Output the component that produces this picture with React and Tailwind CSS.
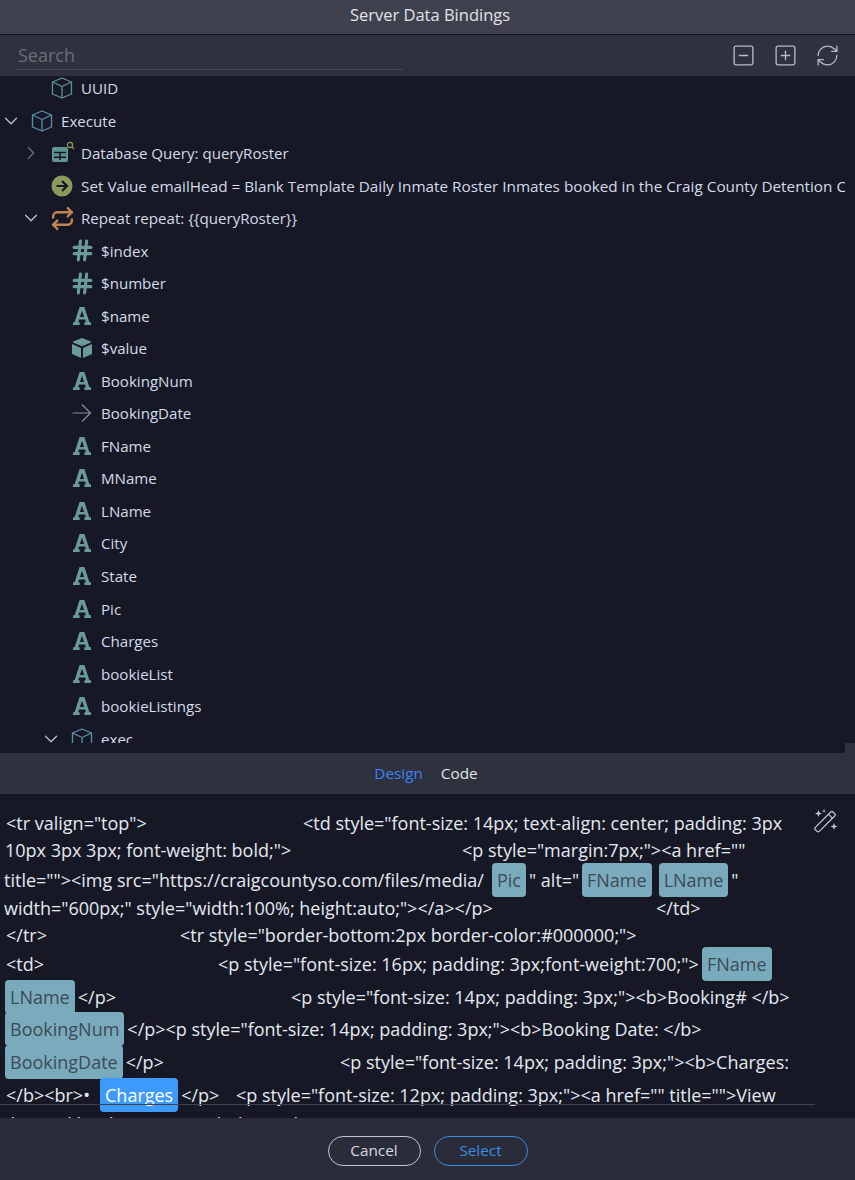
import React from 'react';
import { ChevronRight, ChevronDown, Hash, SquareMinus, SquarePlus, RefreshCw, Repeat } from 'lucide-react';

const AIcon = () => (
  <svg width="20" height="20" viewBox="0 0 20 20" className="text-[#6b9a9a]">
    <path fill="currentColor" fillRule="evenodd" d="M7.6 1h4.8l5 15.2H19V19h-6.6v-2.8h1.5l-.8-2.6H7l-.8 2.6h1.5V19H1v-2.8h1.6L7.6 1zM10 4.8 7.9 11h4.2L10 4.8z" />
  </svg>
);

const HashIcon = () => <Hash size={25} strokeWidth={3} className="shrink-0 text-[#6b9a9a]" />;

const CubeIcon = ({ color }) => (
  <svg width="22" height="22" viewBox="0 0 22 22" fill="none" stroke="currentColor" strokeWidth="1.3" strokeLinejoin="round" className={`shrink-0 ${color}`}>
    <path d="M11 1 20.5 5v12L11 21 1.5 17V5L11 1z" />
    <path d="M1.5 5 11 9.5 20.5 5M11 9.5V21" />
  </svg>
);

const SolidBox = () => (
  <svg width="22" height="22" viewBox="0 0 22 22" className="shrink-0 text-[#6b9a9a]">
    <path fill="currentColor" d="M11 1 2 4.4v1.2l9 3.6 9-3.6V4.4L11 1z" />
    <path fill="currentColor" d="M1 7v10l9 4V11L1 7zm20 0-9 4v10l9-4V7z" />
  </svg>
);

const DbIcon = () => (
  <svg width="23" height="21" viewBox="0 0 23 21" className="ml-[3px] -mt-[3px] shrink-0">
    <rect x="0" y="6" width="16" height="15" rx="2" fill="#5f9490" />
    <path d="M2 11.5h12M2 16.2h12M8 11.5V19" stroke="#161925" strokeWidth="1.5" />
    <circle cx="18" cy="4" r="2.6" fill="none" stroke="#8a9a5b" strokeWidth="1.2" />
    <path d="m20 6 2 2" stroke="#8a9a5b" strokeWidth="1.2" />
  </svg>
);

const SetIcon = () => (
  <svg width="22" height="22" viewBox="0 0 22 22" className="shrink-0">
    <circle cx="11" cy="11" r="10.5" fill="#8a9a5b" />
    <path d="M5.5 11h10M11 6l5 5-5 5" fill="none" stroke="#161925" strokeWidth="2.2" />
  </svg>
);

const ArrowIcon = () => (
  <svg width="20" height="20" viewBox="0 0 20 20" fill="none" stroke="#8d8d9b" strokeWidth="1.2" className="shrink-0">
    <path d="M0.5 10h18M10 1.5l8.5 8.5-8.5 8.5" />
  </svg>
);

const WandIcon = () => (
  <svg width="24" height="24" viewBox="0 0 24 24" className="absolute right-[17px] top-[15px] text-[#c4c6d0]">
    <g fill="none" stroke="currentColor" strokeWidth="1.2">
      <rect x="-1.5" y="9.5" width="25" height="5.6" rx="1.6" transform="rotate(-45 11.5 12.5)" />
      <path d="m14.8 5.6 4 4" />
    </g>
    <path fill="currentColor" d="M4.5 1 5.4 3.6 8 4.5 5.4 5.4 4.5 8 3.6 5.4 1 4.5 3.6 3.6zM20 14l.9 2.6 2.6.9-2.6.9-.9 2.6-.9-2.6-2.6-.9 2.6-.9zM10 0l.5 1.5 1.5.5-1.5.5L10 4l-.5-1.5L8 2l1.5-.5z" />
  </svg>
);

const rows = [
  { indent: 51, icon: <CubeIcon color="text-[#5f9490]" />, label: 'UUID' },
  { indent: 31, chev: 'down', icon: <CubeIcon color="text-[#5b8fa8]" />, label: 'Execute' },
  { indent: 51, chev: 'right', icon: <DbIcon />, label: 'Database Query: queryRoster' },
  { indent: 51, icon: <SetIcon />, label: 'Set Value emailHead = Blank Template Daily Inmate Roster Inmates booked in the Craig County Detention Center', wide: true },
  { indent: 51, chev: 'down', icon: <Repeat size={25} strokeWidth={2.25} className="shrink-0 text-[#c08552]" />, label: 'Repeat repeat: {{queryRoster}}' },
  { indent: 71, icon: <HashIcon />, label: '$index' },
  { indent: 71, icon: <HashIcon />, label: '$number' },
  { indent: 71, icon: <AIcon />, label: '$name' },
  { indent: 71, icon: <SolidBox />, label: '$value' },
  { indent: 71, icon: <AIcon />, label: 'BookingNum' },
  { indent: 71, icon: <ArrowIcon />, label: 'BookingDate' },
  { indent: 71, icon: <AIcon />, label: 'FName' },
  { indent: 71, icon: <AIcon />, label: 'MName' },
  { indent: 71, icon: <AIcon />, label: 'LName' },
  { indent: 71, icon: <AIcon />, label: 'City' },
  { indent: 71, icon: <AIcon />, label: 'State' },
  { indent: 71, icon: <AIcon />, label: 'Pic' },
  { indent: 71, icon: <AIcon />, label: 'Charges' },
  { indent: 71, icon: <AIcon />, label: 'bookieList' },
  { indent: 71, icon: <AIcon />, label: 'bookieListings' },
  { indent: 71, chev: 'down', icon: <CubeIcon color="text-[#5b8fa8]" />, label: 'exec' },
];

const Row = ({ indent, chev, icon, label, wide }) => (
  <div className="flex h-[32.53px] shrink-0 items-center whitespace-nowrap" style={{ paddingLeft: indent }}>
    <div className="relative flex w-[22px] shrink-0 items-center justify-center">
      {chev && (
        <span className="absolute left-[-31px] top-1/2 -translate-y-1/2">
          {chev === 'down'
            ? <ChevronDown size={22} strokeWidth={1.3} className="text-[#c4c6d0]" />
            : <ChevronRight size={22} strokeWidth={1.3} className="text-[#6e7078]" />}
        </span>
      )}
      {icon}
    </div>
    <span className={`ml-2 leading-5 text-[#d5dae6] ${wide ? 'text-[15.3px]' : 'text-[15.1px]'}`}>{label}</span>
  </div>
);

const Tag = ({ children, active }) => (
  <span className={`mr-[3px] rounded-[4px] px-[5px] py-[5px] ${active ? 'bg-[#3f9bfb] text-white' : 'bg-[#7aabbd] text-[#3d4a56]'}`}>
    {children}
  </span>
);

// fixed width segment, so whatever follows starts at the same x as the reference
const Seg = ({ w, children }) => <span className={`inline-block ${w}`}>{children}</span>;

export default function App() {
  return (
    <div className="flex h-[1180px] w-[855px] flex-col overflow-hidden bg-[#161925] font-['Open_Sans',sans-serif] text-[#e4e8f0]">
      <div className="flex h-[35px] shrink-0 items-center justify-center border-b border-[#14161f] bg-[#3f424e] pb-1 pl-[5px] text-[16.5px] text-[#e0e2e8]">
        Server Data Bindings
      </div>
      <div className="flex h-[41px] shrink-0 items-center justify-between bg-[#2f323e] pl-[15px] pr-[15px]">
        <div className="w-[388px] border-b border-[#464955] pl-[3px] text-[18px] leading-[28px] text-[#6a6d75]">Search</div>
        <div className="flex items-center gap-[17px] text-[#b8bac4]">
          <SquareMinus size={25} strokeWidth={1.25} />
          <SquarePlus size={25} strokeWidth={1.25} />
          <RefreshCw size={25} strokeWidth={1.25} />
        </div>
      </div>

      <div className="relative h-[677px] shrink-0">
        <div className="h-[667px] w-[845px] overflow-hidden">
          <div className="-mt-[4px] flex flex-col">
            {rows.map((r) => <Row key={r.label} {...r} />)}
          </div>
        </div>
        <div className="absolute bottom-0 right-0 h-[10px] w-[10px] bg-[#2f323e]" />
      </div>

      <div className="flex h-[41px] shrink-0 items-center justify-center gap-[18px] bg-[#2f323e] pr-[3px] text-[15.3px]">
        <span className="text-[#3b82f6]">Design</span>
        <span className="text-[#e0e2e8]">Code</span>
      </div>

      <div className="relative h-[324px] shrink-0 overflow-hidden">
        <div className="whitespace-pre pt-[15px] text-[18px] text-[#e4e8f0]">
          <div className="h-[28px] pl-[6px] leading-[28px]">
            <Seg w="w-[297px]">{'<tr valign="top">'}</Seg>{'<td style="font-size: 14px; text-align: center; padding: 3px'}
          </div>
          <div className="h-[26px] pl-[5px] leading-[26px]">
            <Seg w="w-[457px]">{'10px 3px 3px; font-weight: bold;">'}</Seg>{'<p style="margin:7px;"><a href=""'}
          </div>
          <div className="h-[34px] pl-[4px] leading-[34px]">
            <Seg w="w-[488px]">{'title=""><img src="https://craigcountyso.com/files/media/'}</Seg>
            <Tag>Pic</Tag><Seg w="w-[53px]">{'" alt="'}</Seg>
            <Tag>FName</Tag><Seg w="w-[4px]" /><Tag>LName</Tag>{'"'}
          </div>
          <div className="h-[22px] pl-[4px] leading-[22px]">
            <Seg w="w-[652px]">{'width="600px;" style="width:100%; height:auto;"></a></p>'}</Seg>{'</td>'}
          </div>
          <div className="h-[32px] pl-[6px] leading-[32px]">
            <Seg w="w-[174px]">{'</tr>'}</Seg>{'<tr style="border-bottom:2px border-color:#000000;">'}
          </div>
          <div className="h-[26px] pl-[6px] leading-[26px]">
            <Seg w="w-[212px]">{'<td>'}</Seg><Seg w="w-[484px]">{'<p style="font-size: 16px; padding: 3px;font-weight:700;">'}</Seg><Tag>FName</Tag>
          </div>
          <div className="h-[40px] pl-[5px] leading-[40px]">
            <Seg w="w-[286px]"><Tag>LName</Tag>{'</p>'}</Seg>{'<p style="font-size: 14px; padding: 3px;"><b>Booking# </b>'}
          </div>
          <div className="h-[24px] pl-[5px] leading-[24px]">
            <Tag>BookingNum</Tag>{'</p><p style="font-size: 14px; padding: 3px;"><b>Booking Date: </b>'}
          </div>
          <div className="h-[42px] pl-[5px] leading-[42px]">
            <Seg w="w-[335px]"><Tag>BookingDate</Tag>{'</p>'}</Seg>{'<p style="font-size: 14px; padding: 3px;"><b>Charges:'}
          </div>
          <div className="h-[24px] pl-[6px] leading-[24px]">
            <Seg w="w-[94px]">{'</b><br>•'}</Seg><Seg w="w-[136px]"><Tag active>Charges</Tag>{'</p>'}</Seg>{'<p style="font-size: 12px; padding: 3px;"><a href="" title="">View'}
          </div>
          <div className="h-[34px] pl-[4px] leading-[34px]">
            {'their jail booking report <b>here</b></a></p>'}
          </div>
        </div>
        <WandIcon />
        <div className="absolute bottom-[13px] left-0 h-px w-[815px] bg-[#3f424e]" />
      </div>

      <div className="flex flex-1 items-center justify-center gap-[13px] bg-[#2a2c39] pt-[3px] text-[15.3px]">
        <button className="h-[30px] w-[93px] rounded-full border border-[#c4c6cc] text-[#d8dae0]">Cancel</button>
        <button className="h-[30px] w-[94px] rounded-full border border-[#3b8de0] text-[#3b8de0]">Select</button>
      </div>
    </div>
  );
}
